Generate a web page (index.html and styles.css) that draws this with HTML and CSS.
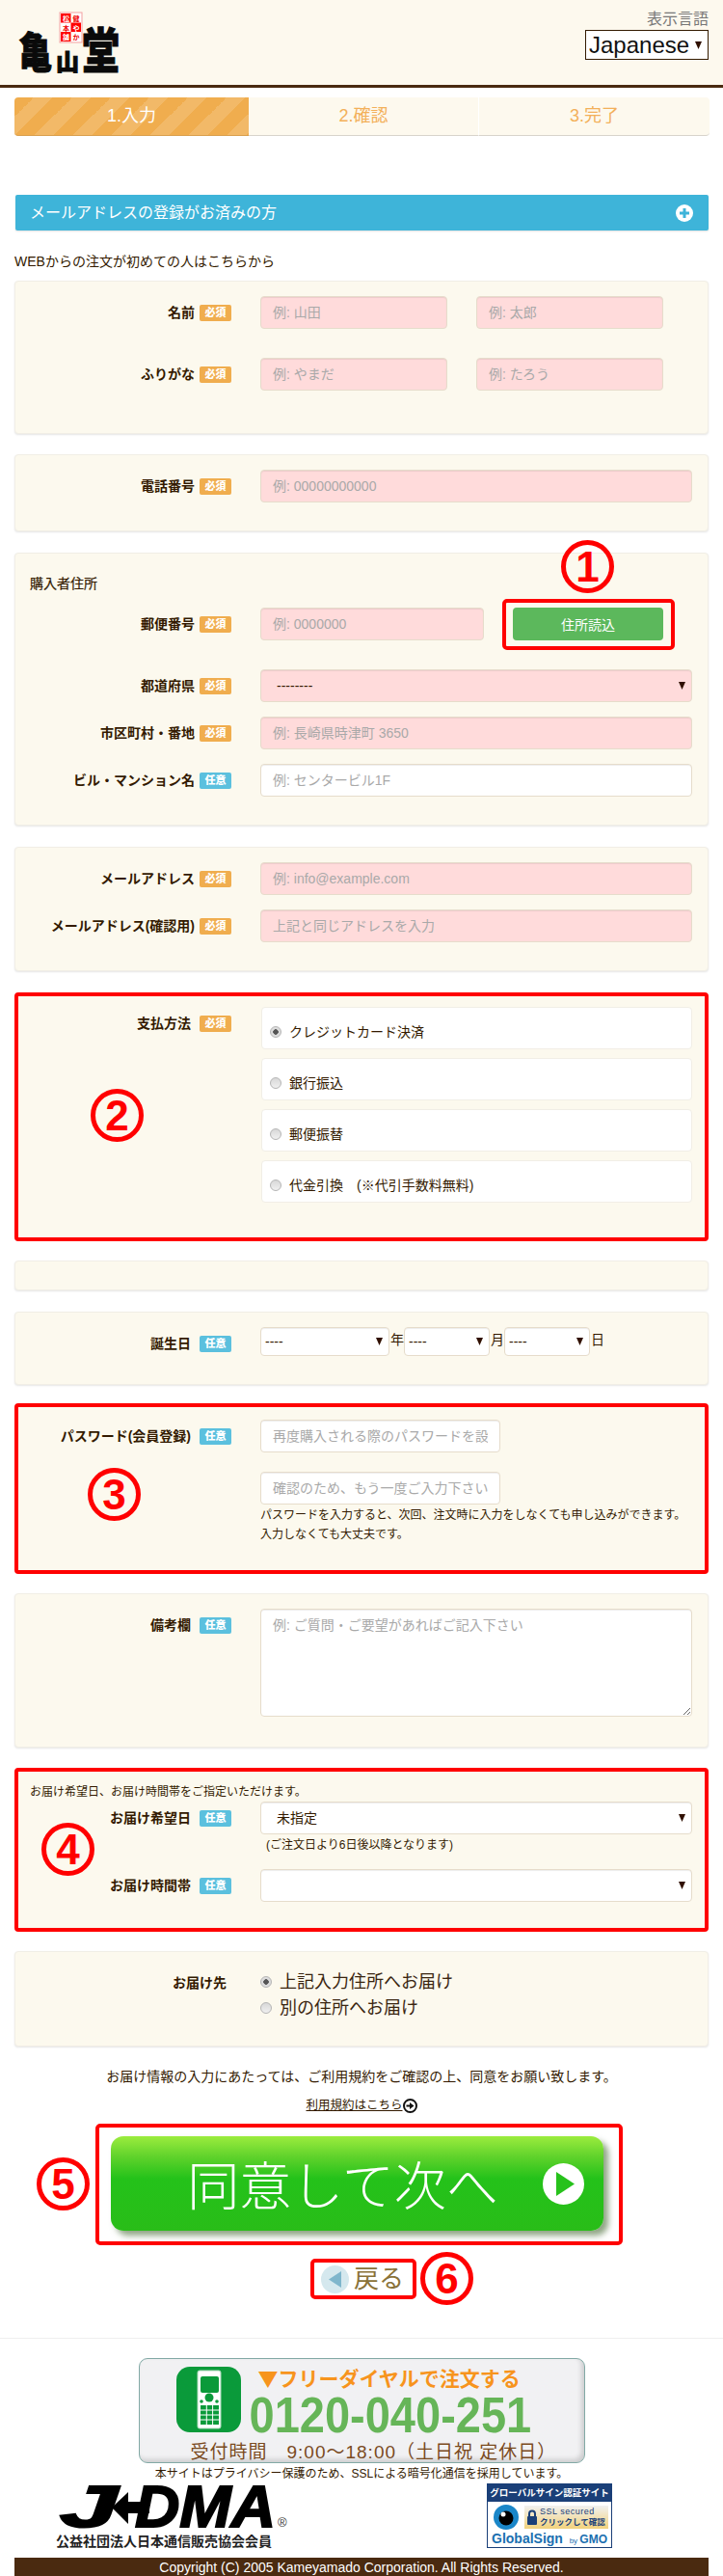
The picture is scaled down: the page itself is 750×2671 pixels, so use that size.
FILE: index.html
```html
<!DOCTYPE html>
<html lang="ja">
<head>
    <meta charset="UTF-8">
    <meta name="viewport" content="width=device-width, initial-scale=1.0">
    <title>亀山堂 - 注文情報の入力</title>
    <link rel="stylesheet" href="styles.css">
</head>
<body>
    <header class="site-header">
        <svg class="logo" width="125" height="78" viewBox="0 0 125 78">
            <g class="logo-seal">
                <rect x="62" y="13" width="23" height="31" fill="#fff" stroke="#f3a0a0"/>
                <rect x="63" y="14" width="10.5" height="9.5" fill="#f00"/>
                <rect x="73.5" y="23.5" width="10.5" height="9.5" fill="#f00"/>
                <rect x="63" y="33" width="10.5" height="10" fill="#f00"/>
                <text x="65" y="22" fill="#fff">松</text>
                <text x="75.5" y="22" fill="#e00">健</text>
                <text x="65" y="31.5" fill="#e00">本</text>
                <text x="75.5" y="31.5" fill="#fff">や</text>
                <text x="65" y="41" fill="#fff">舗</text>
                <text x="75.5" y="41" fill="#e00">か</text>
            </g>
            <text class="logo-char" x="19" y="71" font-size="44" textLength="35" lengthAdjust="spacingAndGlyphs">亀</text>
            <text class="logo-char" x="58" y="73" font-size="24">山</text>
            <text class="logo-char" x="85" y="71" font-size="50" textLength="39" lengthAdjust="spacingAndGlyphs">堂</text>
        </svg>
        <div class="lang">
            <div class="lang-title">表示言語</div>
            <select class="lang-select">
                <option>Japanese</option>
                <option>English</option>
            </select>
        </div>
    </header>

    <div class="page">
        <ol class="steps">
            <li class="step step-active">1.入力</li>
            <li class="step">2.確認</li>
            <li class="step">3.完了</li>
        </ol>

        <div class="member-bar">
            <span>メールアドレスの登録がお済みの方</span>
            <svg width="18" height="18" viewBox="0 0 18 18">
                <circle cx="9" cy="9" r="9" fill="#fff"/>
                <path d="M7.5 4h3v3.5H14v3h-3.500V14h-3v-3.500H4v-3h3.500z" fill="#3eb4d9"/>
            </svg>
        </div>

        <p class="first-time">WEBからの注文が初めての人はこちらから</p>

        <form class="order-form">
            <section class="panel panel-name">
                <div class="row row-gap">
                    <div class="label"><span>名前</span><b class="badge">必須</b></div>
                    <div class="field field-pair">
                        <input type="text" class="input input-pink" placeholder="例: 山田">
                        <input type="text" class="input input-pink" placeholder="例: 太郎">
                    </div>
                </div>
                <div class="row row-gap">
                    <div class="label"><span>ふりがな</span><b class="badge">必須</b></div>
                    <div class="field field-pair">
                        <input type="text" class="input input-pink" placeholder="例: やまだ">
                        <input type="text" class="input input-pink" placeholder="例: たろう">
                    </div>
                </div>
            </section>

            <section class="panel">
                <div class="row">
                    <div class="label"><span>電話番号</span><b class="badge">必須</b></div>
                    <div class="field"><input type="text" class="input input-pink" placeholder="例: 00000000000"></div>
                </div>
            </section>

            <section class="panel panel-address">
                <h4 class="panel-title">購入者住所</h4>
                <div class="row row-gap">
                    <div class="label"><span>郵便番号</span><b class="badge">必須</b></div>
                    <div class="field field-zip">
                        <input type="text" class="input input-pink input-zip" placeholder="例: 0000000">
                        <div class="zip-button">
                            <button type="button" class="btn-green">住所読込</button>
                            <span class="mark-box"></span>
                            <span class="num num-1">1</span>
                        </div>
                    </div>
                </div>
                <div class="row">
                    <div class="label"><span>都道府県</span><b class="badge">必須</b></div>
                    <div class="field">
                        <select class="input input-pink select"><option>--------</option></select>
                    </div>
                </div>
                <div class="row">
                    <div class="label"><span>市区町村・番地</span><b class="badge">必須</b></div>
                    <div class="field"><input type="text" class="input input-pink" placeholder="例: 長崎県時津町 3650"></div>
                </div>
                <div class="row">
                    <div class="label"><span>ビル・マンション名</span><b class="badge badge-blue">任意</b></div>
                    <div class="field"><input type="text" class="input" placeholder="例: センタービル1F"></div>
                </div>
            </section>

            <section class="panel">
                <div class="row">
                    <div class="label"><span>メールアドレス</span><b class="badge">必須</b></div>
                    <div class="field"><input type="text" class="input input-pink" placeholder="例: info@example.com"></div>
                </div>
                <div class="row">
                    <div class="label"><span>メールアドレス(確認用)</span><b class="badge">必須</b></div>
                    <div class="field"><input type="text" class="input input-pink" placeholder="上記と同じアドレスを入力"></div>
                </div>
            </section>

            <section class="panel panel-marked panel-pay">
                <span class="num num-2">2</span>
                <div class="row">
                    <div class="label label-wide"><span>支払方法</span><b class="badge">必須</b></div>
                    <div class="field pay-list">
                        <label class="pay-item"><input type="radio" name="pay" class="radio" checked>クレジットカード決済</label>
                        <label class="pay-item"><input type="radio" name="pay" class="radio">銀行振込</label>
                        <label class="pay-item"><input type="radio" name="pay" class="radio">郵便振替</label>
                        <label class="pay-item"><input type="radio" name="pay" class="radio">代金引換　(※代引手数料無料)</label>
                    </div>
                </div>
            </section>

            <section class="panel panel-empty"></section>

            <section class="panel panel-birth">
                <div class="row">
                    <div class="label label-wide"><span>誕生日</span><b class="badge badge-blue">任意</b></div>
                    <div class="field field-birth">
                        <select class="input select select-small select-year"><option>----</option></select><span class="unit">年</span>
                        <select class="input select select-small"><option>----</option></select><span class="unit">月</span>
                        <select class="input select select-small"><option>----</option></select><span class="unit">日</span>
                    </div>
                </div>
            </section>

            <section class="panel panel-marked panel-pass">
                <span class="num num-3">3</span>
                <div class="row">
                    <div class="label label-wide"><span>パスワード(会員登録)</span><b class="badge badge-blue">任意</b></div>
                    <div class="field">
                        <input type="password" class="input input-pass" placeholder="再度購入される際のパスワードを設定して下さい">
                        <input type="password" class="input input-pass input-pass-2" placeholder="確認のため、もう一度ご入力下さい">
                        <p class="note">パスワードを入力すると、次回、注文時に入力をしなくても申し込みができます。<br>入力しなくても大丈夫です。</p>
                    </div>
                </div>
            </section>

            <section class="panel panel-memo">
                <div class="row">
                    <div class="label label-wide"><span>備考欄</span><b class="badge badge-blue">任意</b></div>
                    <div class="field"><textarea class="input memo" placeholder="例: ご質問・ご要望があればご記入下さい"></textarea></div>
                </div>
            </section>

            <section class="panel panel-marked panel-date">
                <span class="num num-4">4</span>
                <p class="date-lead">お届け希望日、お届け時間帯をご指定いただけます。</p>
                <div class="row">
                    <div class="label label-wide"><span>お届け希望日</span><b class="badge badge-blue">任意</b></div>
                    <div class="field">
                        <select class="input select"><option>未指定</option></select>
                        <p class="date-hint">(ご注文日より6日後以降となります)</p>
                    </div>
                </div>
                <div class="row">
                    <div class="label label-wide"><span>お届け時間帯</span><b class="badge badge-blue">任意</b></div>
                    <div class="field"><select class="input select"><option></option></select></div>
                </div>
            </section>

            <section class="panel panel-dest">
                <div class="row">
                    <div class="label label-dest"><span>お届け先</span></div>
                    <div class="field dest-list">
                        <label class="dest-item"><input type="radio" name="dest" class="radio" checked>上記入力住所へお届け</label>
                        <label class="dest-item"><input type="radio" name="dest" class="radio">別の住所へお届け</label>
                    </div>
                </div>
            </section>
        </form>

        <p class="agree">お届け情報の入力にあたっては、ご利用規約をご確認の上、同意をお願い致します。</p>
        <p class="terms">
            <a href="#">利用規約はこちら</a>
            <svg width="15" height="15" viewBox="0 0 15 15">
                <circle cx="7.500" cy="7.500" r="6.500" fill="#fff" stroke="#111" stroke-width="2"/>
                <path d="M3.500 6.500h3.500V4l4.500 3.500L7 11V8.500H3.500z" fill="#111"/>
            </svg>
        </p>

        <div class="next-box">
            <span class="num num-5">5</span>
            <button type="button" class="next-btn">
                <span class="next-text">同意して次へ</span>
                <svg width="43" height="43" viewBox="0 0 43 43">
                    <circle cx="21.500" cy="21.500" r="21.500" fill="#fff"/>
                    <path d="M14 9l19 12.500L14 34z" fill="#27c21c"/>
                </svg>
            </button>
        </div>

        <div class="back-box">
            <span class="num num-6">6</span>
            <svg width="29" height="29" viewBox="0 0 29 29">
                <circle cx="14.500" cy="14.500" r="14.500" fill="#d5e8ee"/>
                <path d="M8 14.500L21 6v17z" fill="#7fb6cc"/>
            </svg>
            <span class="back-text">戻る</span>
        </div>
    </div>

    <footer class="site-footer">
        <div class="tel-banner">
            <div class="tel-top">
                <svg class="tel-icon" width="67" height="68" viewBox="0 0 67 68">
                    <rect width="67" height="68" rx="14" fill="#0a9a3a"/>
                    <rect x="22" y="4" width="24" height="60" rx="2" fill="#fff" stroke="#a8d8b8"/>
                    <rect x="25" y="10" width="19" height="17" rx="2" fill="#0a9a3a"/>
                    <circle cx="34" cy="32" r="4.500" fill="#0a9a3a"/>
                    <circle cx="26" cy="36" r="1.800" fill="#0a9a3a"/>
                    <circle cx="42" cy="36" r="1.800" fill="#0a9a3a"/>
                    <path d="M25 40h19v20H25z" fill="#0a9a3a"/>
                    <path d="M31.300 40v20M37.600 40v20M25 45h19M25 50h19M25 55h19" stroke="#fff"/>
                </svg>
                <div class="tel-main">
                    <div class="tel-lead"><span class="tel-mark">▼</span>フリーダイヤルで注文する</div>
                    <div class="tel-number">0120-040-251</div>
                </div>
            </div>
            <div class="tel-hours">受付時間　9:00〜18:00（土日祝 定休日）</div>
        </div>

        <p class="ssl-note">本サイトはプライバシー保護のため、SSLによる暗号化通信を採用しています。</p>

        <div class="seals">
            <div class="jdma">
                <svg width="242" height="50" viewBox="0 0 242 50">
                    <text class="jdma-letter" x="4" y="45" font-size="62" textLength="60" lengthAdjust="spacingAndGlyphs">J</text>
                    <path d="M58 25L75 9v10h22v12H75v11z" fill="#000"/>
                    <text class="jdma-letter" x="82" y="45" font-size="62" textLength="146" lengthAdjust="spacingAndGlyphs">DMA</text>
                    <text x="230" y="45" class="jdma-r">®</text>
                </svg>
                <div class="jdma-caption">公益社団法人日本通信販売協会会員</div>
            </div>

            <div class="gsign">
                <div class="gsign-head">グローバルサイン認証サイト</div>
                <div class="gsign-body">
                    <svg width="26" height="26" viewBox="0 0 26 26">
                        <circle cx="13" cy="13" r="13" fill="#1a86c8"/>
                        <circle cx="13" cy="14" r="7.500" fill="#000"/>
                        <circle cx="10" cy="10" r="2.500" fill="#fff"/>
                    </svg>
                    <div class="gsign-ssl">
                        <svg width="10" height="16" viewBox="0 0 10 16">
                            <path d="M2 7V4.500a3 3 0 0 1 6 0V7" fill="none" stroke="#1a3f78" stroke-width="2"/>
                            <rect y="7" width="10" height="9" rx="1" fill="#1a3f78"/>
                        </svg>
                        <div>
                            <div class="gsign-sec">SSL secured</div>
                            <div class="gsign-click">クリックして確認</div>
                        </div>
                    </div>
                </div>
                <div class="gsign-brand"><span>GlobalSign</span><small>by <b>GMO</b></small></div>
            </div>
        </div>

        <div class="copyright">Copyright (C) 2005 Kameyamado Corporation. All Rights Reserved.</div>
    </footer>
</body>
</html>
```

FILE: styles.css
```css
body {
    margin: 0;
    padding: 0;
    background-color: #fff;
    color: #331a00;
    font-family: "Liberation Sans", "Noto Sans CJK JP", sans-serif;
    font-size: 14px;
    line-height: 20px;
}
p, h4, ol {
    margin: 0;
    padding: 0;
}

/* header */
.site-header {
    height: 88px;
    background-color: #fdf9ee;
    border-bottom: 3px solid #4a2a10;
    display: flex;
    justify-content: space-between;
}
.logo {
    display: block;
}
.logo-seal text {
    font-size: 7px;
    font-weight: 700;
}
.logo-char {
    font-weight: 900;
    fill: #0a0a0a;
    stroke: #0a0a0a;
    stroke-width: 1;
}
.lang {
    padding: 9px 15px 0 0;
    text-align: right;
}
.lang-title {
    color: #777;
    font-size: 16px;
    line-height: 22px;
}
.lang-select {
    appearance: none;
    display: block;
    width: 128px;
    height: 31px;
    box-sizing: border-box;
    border: 1px solid #331a00;
    border-radius: 0;
    padding: 0 0 0 3px;
    font-family: inherit;
    font-size: 24px;
    color: #111;
    background: #fff url("data:image/svg+xml,%3Csvg xmlns='http://www.w3.org/2000/svg' width='7' height='8'%3E%3Cpath d='M0 0h7L3.500 8z' fill='%23301000'/%3E%3C/svg%3E") no-repeat right 6px center;
}

.page {
    margin: 0 15px;
}

/* steps */
.steps {
    list-style: none;
    display: flex;
    margin-top: 10px;
    height: 40px;
}
.step {
    flex: 239px 0 0;
    box-sizing: border-box;
    background-color: #fdf9ee;
    border-bottom: 1px solid #d8d4cc;
    border-right: 1px solid #fff;
    color: #f3b05a;
    font-size: 18px;
    line-height: 38px;
    text-align: center;
}
.step:last-child {
    border-radius: 0 4px 4px 0;
    border-right: none;
}
.step-active {
    flex-basis: 243px;
    border-radius: 4px 0 0 4px;
    border-bottom-color: #d9a050;
    border-right: none;
    color: #fff;
    background-color: #f0ad4e;
    background-image: linear-gradient(-45deg, rgba(255,255,255,.15) 25%, transparent 25%, transparent 50%, rgba(255,255,255,.15) 50%, rgba(255,255,255,.15) 75%, transparent 75%, transparent);
    background-size: 40px 40px;
}

.member-bar {
    margin: 61px 0 0 1px;
    height: 37px;
    box-sizing: border-box;
    padding: 0 16px 0 15px;
    display: flex;
    align-items: center;
    justify-content: space-between;
    background-color: #3eb4d9;
    color: #fff;
    font-size: 16px;
    border-radius: 2px;
    box-shadow: 0 1px 2px rgba(0,0,0,0.12);
}
.first-time {
    margin-top: 22px;
}

/* form panels */
.order-form {
    margin-top: 10px;
}
.panel {
    position: relative;
    box-sizing: border-box;
    margin-bottom: 22px;
    padding: 15px 16px 14px 15px;
    background-color: #fcf9ee;
    border: 1px solid #f1eee6;
    border-radius: 4px;
    box-shadow: 0 1px 2px rgba(0,0,0,0.1);
}
.panel-name {
    margin-bottom: 21px;
}
.panel-marked {
    border: 4px solid #f00;
    padding-left: 12px;
    padding-right: 13px;
    box-shadow: none;
}
.panel-title {
    margin: 6px 0 15px;
    font-size: 14px;
    font-weight: 400;
    -webkit-text-stroke: 0.2px #331a00;
}
.row {
    display: flex;
    margin-bottom: 15px;
}
.row-gap {
    margin-bottom: 30px;
}
.label {
    flex: 209px 0 0;
    height: 34px;
    display: flex;
    align-items: center;
    justify-content: flex-end;
    gap: 5px;
    font-weight: 700;
}
.label-wide {
    gap: 9px;
}
.badge {
    width: 33px;
    height: 17px;
    flex: none;
    border-radius: 2px;
    background-color: #f0ad4e;
    color: #fff;
    font-size: 11px;
    line-height: 17px;
    text-align: center;
}
.badge-blue {
    background-color: #5bc0de;
}
.field {
    flex: 448px 0 0;
    margin-left: 30px;
    min-width: 0;
}
.input {
    display: block;
    box-sizing: border-box;
    width: 100%;
    height: 34px;
    padding: 0 12px;
    border: 1px solid #e6dccb;
    border-radius: 4px;
    background-color: #fff;
    box-shadow: inset 0 1px 1px rgba(0,0,0,0.075);
    font-family: inherit;
    font-size: 14px;
    color: #331a00;
}
.input::placeholder {
    color: #a9a9a9;
    opacity: 1;
}
.input-pink {
    background-color: #ffdbdb;
}
.select {
    appearance: none;
    padding-left: 16px;
    background-image: url("data:image/svg+xml,%3Csvg xmlns='http://www.w3.org/2000/svg' width='7' height='8'%3E%3Cpath d='M0 0h7L3.500 8z' fill='%23301000'/%3E%3C/svg%3E");
    background-repeat: no-repeat;
    background-position: right 6px center;
}
.field-pair {
    display: flex;
    gap: 30px;
}
.field-pair .input {
    width: 194px;
}
.field-zip {
    display: flex;
}
.input-zip {
    width: 232px;
}
.zip-button {
    position: relative;
    margin-left: 30px;
    width: 156px;
}
.btn-green {
    display: block;
    width: 100%;
    height: 34px;
    border: none;
    border-radius: 4px;
    background-color: #5cb85c;
    color: #fff;
    font-family: inherit;
    font-size: 14px;
}
.mark-box {
    position: absolute;
    top: -9px;
    bottom: -10px;
    left: -11px;
    right: -12px;
    border: 4px solid #f00;
    border-radius: 5px;
}

/* circled annotation numbers */
.num {
    position: absolute;
    box-sizing: border-box;
    width: 55px;
    height: 55px;
    border: 5px solid #f00;
    border-radius: 50%;
    color: #f00;
    font-size: 44px;
    font-weight: 700;
    line-height: 45px;
    text-align: center;
}
.num-1 {
    top: -70px;
    left: 50px;
}
.num-2 {
    left: 75px;
    top: 96px;
}
.num-3 {
    left: 72px;
    top: 63px;
}
.num-4 {
    left: 24px;
    top: 53px;
}
.num-5 {
    left: -65px;
    top: 31px;
}
.num-6 {
    left: 110px;
    top: -11px;
}

/* payment */
.panel-pay {
    padding-top: 11px;
    padding-bottom: 36px;
    margin-bottom: 20px;
}
.panel-pay .row {
    margin-bottom: 0;
}
.pay-list {
    display: flex;
    flex-direction: column;
    gap: 9px;
    margin-left: 31px;
    flex-basis: 447px;
}
.pay-item {
    display: flex;
    align-items: center;
    box-sizing: border-box;
    height: 44px;
    padding: 7px 0 0 8px;
    background-color: #fff;
    border: 1px solid #f1eee6;
    border-radius: 4px;
}
.radio {
    appearance: none;
    flex: none;
    width: 12px;
    height: 12px;
    margin: 0 8px 0 0;
    border: 1px solid #b5b5b5;
    border-radius: 50%;
    background: linear-gradient(#d8d8d8, #f0f0f0);
}
.radio:checked {
    background: radial-gradient(circle, #555 0, #555 2.5px, #ddd 3px);
}

.panel-empty {
    height: 31px;
    padding: 0;
}

/* birthday */
.panel-birth {
    padding-bottom: 10px;
    margin-bottom: 19px;
}
.field-birth {
    display: flex;
    align-items: center;
    height: 30px;
}
.select-small {
    width: 89px;
    height: 30px;
    padding: 0 0 0 4px;
    background-position: right 6px center;
}
.select-year {
    width: 134px;
}
.unit {
    width: 15px;
    flex: none;
    padding-left: 1px;
    box-sizing: border-box;
    position: relative;
    top: -2px;
}

/* password */
.panel-pass {
    padding-top: 13px;
    padding-bottom: 12px;
    margin-bottom: 20px;
}
.input-pass {
    width: 249px;
}
.input-pass-2 {
    margin-top: 20px;
}
.note {
    margin-top: 1px;
    font-size: 12px;
    white-space: nowrap;
}

/* memo */
.panel-memo {
    padding-bottom: 16px;
    margin-bottom: 21px;
}
.memo {
    height: 112px;
    padding: 6px 12px;
    line-height: 20px;
}

/* delivery date */
.panel-date {
    padding-top: 11px;
    padding-bottom: 12px;
    margin-bottom: 20px;
}
.date-lead {
    font-size: 12px;
}
.date-hint {
    margin: 1px 0 0 6px;
    font-size: 12px;
}

/* destination */
.panel-dest {
    height: 99px;
    margin-bottom: 0;
}
.label-dest {
    flex-basis: 204px;
}
.dest-list {
    margin-left: 35px;
    padding-top: 2px;
}
.dest-item {
    display: flex;
    align-items: center;
    height: 27px;
    font-size: 18px;
    color: #3a2510;
}

.agree {
    margin-top: 21px;
    text-align: center;
}
.terms {
    margin-top: 10px;
    display: flex;
    justify-content: center;
    align-items: center;
    font-size: 12.500px;
}
.terms a {
    color: #331a00;
}

/* next and back buttons */
.next-box {
    position: relative;
    box-sizing: border-box;
    width: 547px;
    height: 126px;
    margin: 9px 0 0 84px;
    padding: 9px 0 0 12px;
    border: 4px solid #f00;
    border-radius: 5px;
}
.next-btn {
    display: flex;
    align-items: center;
    justify-content: space-between;
    box-sizing: border-box;
    width: 511px;
    height: 98px;
    padding: 0 20px 0 79px;
    border: none;
    border-radius: 13px;
    background: linear-gradient(#9cec3e 0, #5fd22b 22%, #24c21a 45%, #29bd18 100%);
    box-shadow: 5px 5px 6px rgba(50,90,30,0.55);
    color: #fff;
}
.next-text {
    font-family: "Noto Sans CJK JP", sans-serif;
    font-size: 54px;
    font-weight: 300;
    line-height: 60px;
    white-space: nowrap;
    width: 323px;
}
.back-box {
    position: relative;
    box-sizing: border-box;
    width: 110px;
    height: 42px;
    margin: 14px 0 0 307px;
    padding-left: 7px;
    display: flex;
    align-items: center;
    gap: 5px;
    border: 4px solid #f00;
    border-radius: 5px;
}
.back-text {
    color: #8a7238;
    font-size: 26px;
    line-height: 30px;
    white-space: nowrap;
}

/* footer */
.site-footer {
    margin-top: 40px;
    padding-top: 20px;
    border-top: 1px solid #eee;
}
.tel-banner {
    box-sizing: border-box;
    width: 463px;
    height: 109px;
    margin: 0 auto;
    padding: 8px 0 0 38px;
    background-color: #f1f1f3;
    border: 1px solid #82a9a5;
    border-radius: 9px;
    box-shadow: inset -3px -3px 5px rgba(0,0,0,0.15);
}
.tel-top {
    display: flex;
    gap: 9px;
}
.tel-icon {
    flex: none;
}
.tel-main {
    margin-top: -1px;
}
.tel-lead {
    padding-left: 9px;
    color: #f7941d;
    font-size: 21px;
    font-weight: 700;
    line-height: 24px;
    white-space: nowrap;
}
.tel-mark {
    font-family: "Noto Sans CJK JP", sans-serif;
}
.tel-number {
    margin-top: 3px;
    color: #66b558;
    font-size: 47px;
    font-weight: 700;
    line-height: 44px;
    white-space: nowrap;
    transform: scaleY(1.1);
}
.tel-hours {
    margin: 5px 0 0 15px;
    color: #7a4a1e;
    font-size: 19px;
    letter-spacing: 1px;
    line-height: 24px;
    white-space: nowrap;
}
.ssl-note {
    margin-top: 1px;
    font-size: 12px;
    text-align: center;
}
.seals {
    display: flex;
    justify-content: space-between;
    padding: 0 115px 0 58px;
    height: 67px;
}
.jdma svg {
    display: block;
}
.jdma-letter {
    font-family: "Liberation Sans", sans-serif;
    font-size: 62px;
    font-weight: 700;
    font-style: italic;
    fill: #000;
    stroke: #000;
    stroke-width: 2;
}
.jdma-r {
    font-size: 13px;
    fill: #333;
}
.jdma-caption {
    margin-top: 4px;
    color: #222;
    font-size: 14px;
    font-weight: 700;
    line-height: 13px;
    white-space: nowrap;
}
.gsign {
    box-sizing: border-box;
    width: 130px;
    height: 67px;
    border: 1px solid #1a3f78;
    background-color: #fff;
    overflow: hidden;
}
.gsign-head {
    height: 18px;
    background-color: #1a3f78;
    color: #fff;
    font-size: 9.500px;
    font-weight: 700;
    line-height: 18px;
    text-align: center;
    white-space: nowrap;
}
.gsign-body {
    display: flex;
    align-items: center;
    gap: 6px;
    padding: 3px 3px 0 6px;
}
.gsign-ssl {
    display: flex;
    align-items: center;
    gap: 3px;
    flex: 1;
    height: 24px;
    padding-left: 3px;
    background: linear-gradient(#f1f1f1, #f2d27c);
}
.gsign-sec {
    color: #1a3f78;
    font-size: 9px;
    letter-spacing: 0.5px;
    line-height: 11px;
    white-space: nowrap;
}
.gsign-click {
    color: #1a3f78;
    font-size: 8.500px;
    font-weight: 700;
    line-height: 11px;
    white-space: nowrap;
}
.gsign-brand {
    display: flex;
    align-items: baseline;
    justify-content: space-between;
    padding: 1px 4px 0;
    color: #1a6fb0;
    font-size: 14px;
    font-weight: 700;
    line-height: 16px;
    white-space: nowrap;
}
.gsign-brand small {
    font-size: 8px;
    font-weight: 400;
}
.gsign-brand b {
    font-size: 12px;
}
.copyright {
    margin: 10px 15px 0;
    height: 20px;
    background-color: #4a2a10;
    color: #fff;
    line-height: 20px;
    text-align: center;
}
```
